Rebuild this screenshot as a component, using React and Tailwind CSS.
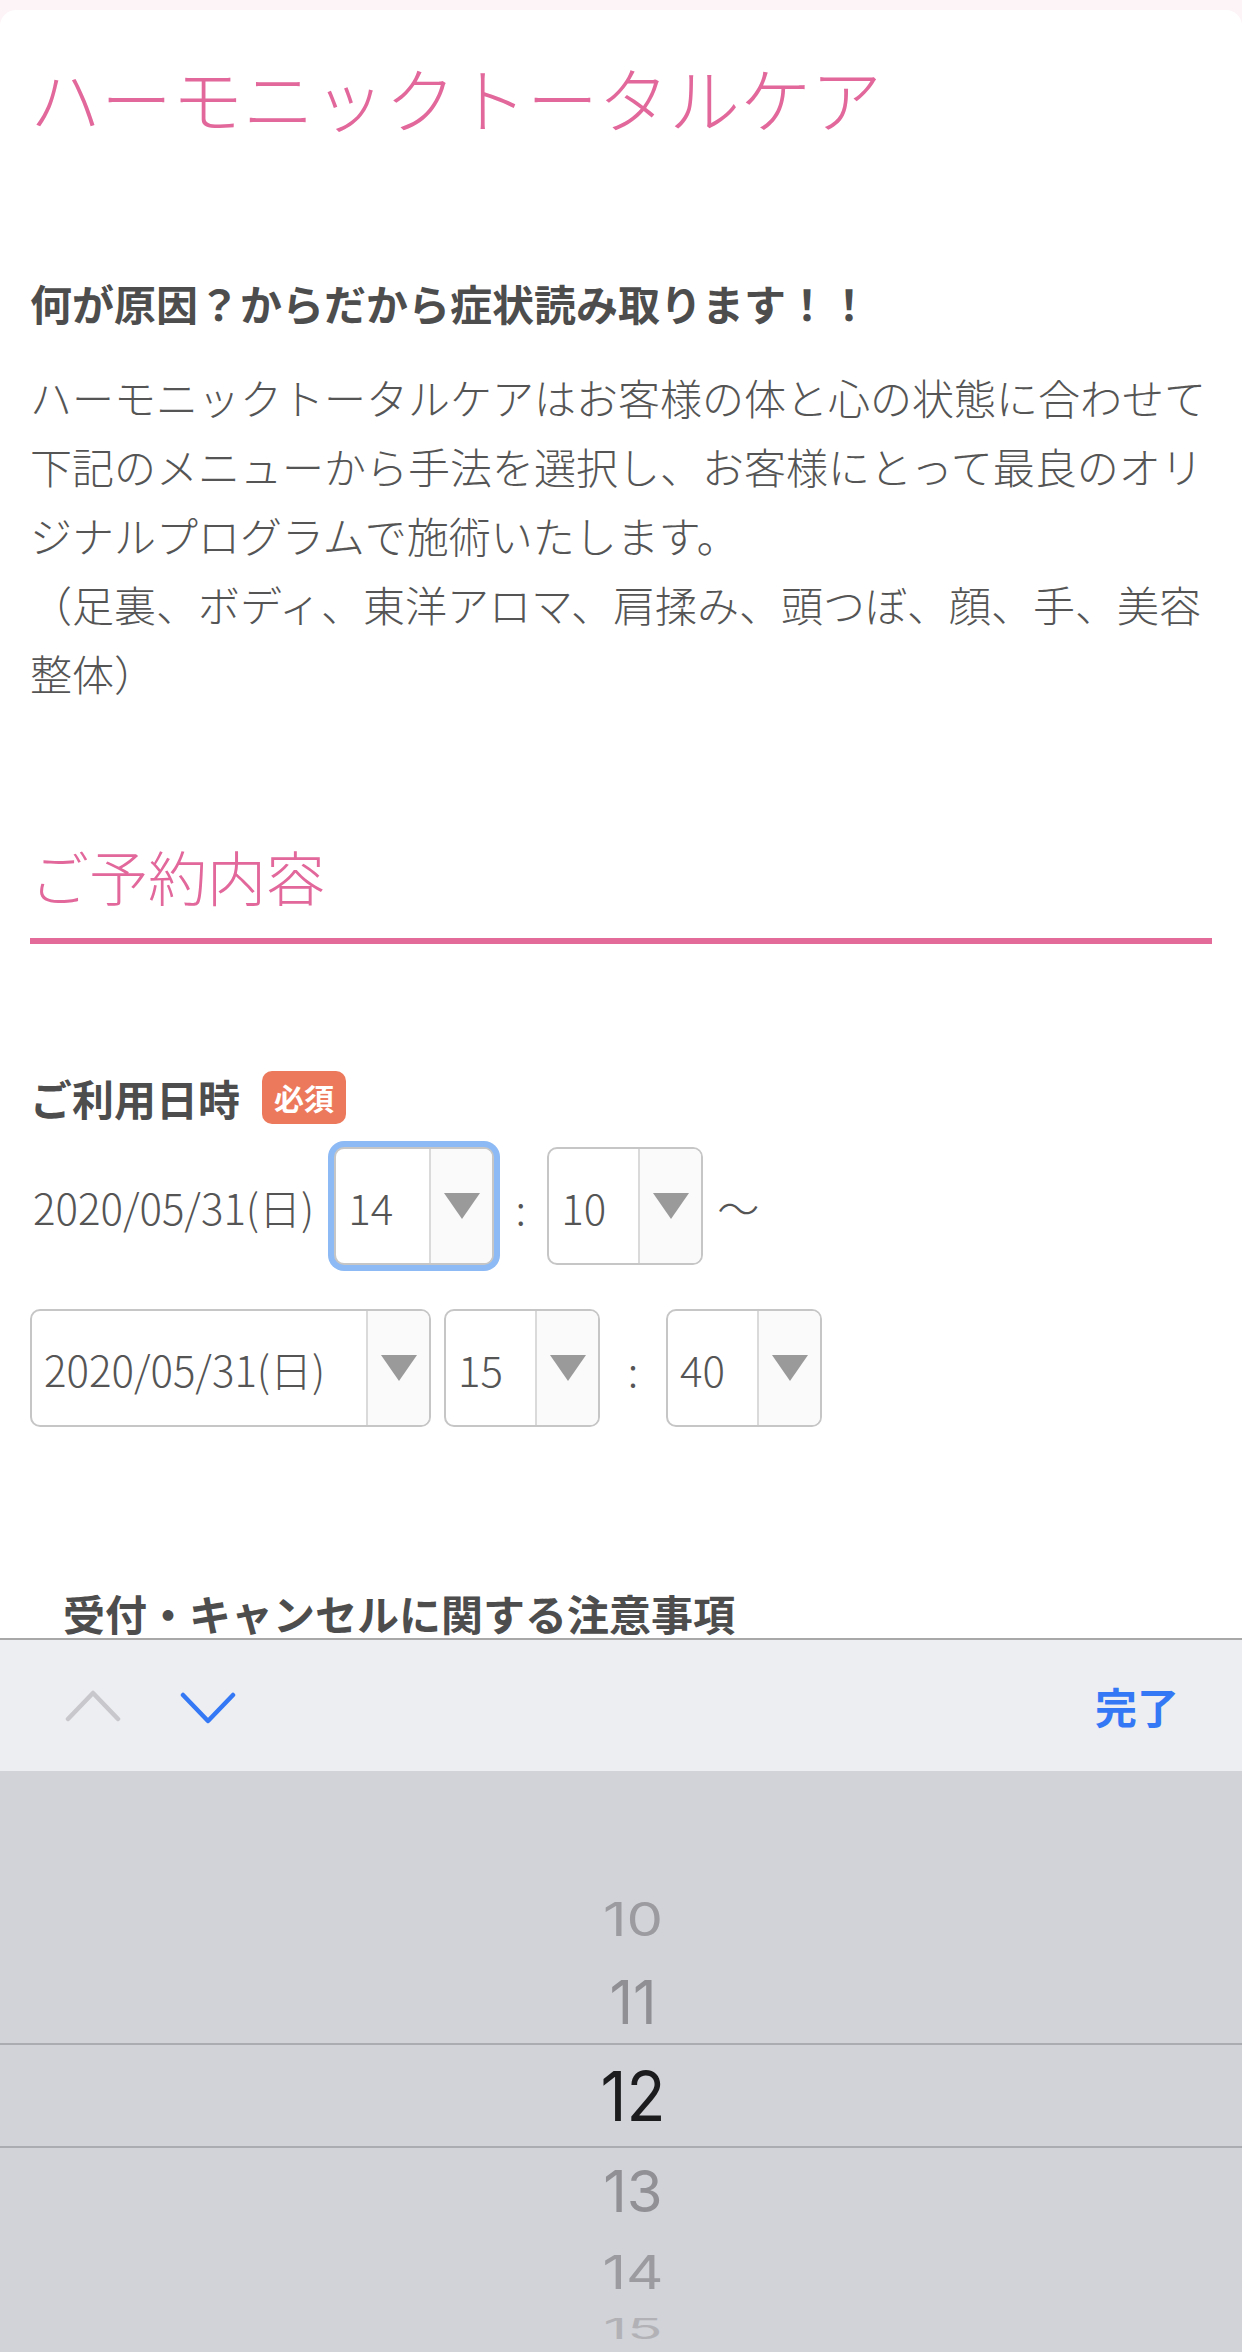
import React from "react";

const lines = [
  "ハーモニックトータルケアはお客様の体と心の状態に合わせて",
  "下記のメニューから手法を選択し、お客様にとって最良のオリ",
  "ジナルプログラムで施術いたします。",
  "（足裏、ボディ、東洋アロマ、肩揉み、頭つぼ、顔、手、美容",
  "整体）",
];

function Arrow() {
  return (
    <svg width="36" height="26" viewBox="0 0 36 26">
      <polygon points="0,0 36,0 18,26" fill="#9a9a9a" />
    </svg>
  );
}

function Select({ value, width, focused }) {
  return (
    <div
      className={`flex h-[118px] shrink-0 rounded-[10px] border-2 border-[#c6c6c6] bg-white ${width} ${
        focused ? "ring-[6px] ring-[#8dbaf4]" : ""
      }`}
    >
      <div className="flex flex-1 items-center whitespace-nowrap pl-[12px] text-[42px] font-light text-[#555]">
        {value}
      </div>
      <div className="flex w-[63px] items-center justify-center rounded-r-[8px] border-l-2 border-[#dadada] bg-[#fafafa]">
        <Arrow />
      </div>
    </div>
  );
}

function WheelRow({ h, children, cls }) {
  return (
    <div className={`flex w-full shrink-0 items-center justify-center pl-[24px] ${h}`}>
      <span className={`inline-block leading-none ${cls}`}>{children}</span>
    </div>
  );
}

export default function App() {
  return (
    <div className="relative min-h-screen overflow-hidden bg-[#fdf4f7] pt-[10px] font-['Noto_Sans_CJK_JP',sans-serif] text-[#555]">
      <div className="min-h-[2342px] rounded-t-[16px] bg-white px-[30px] pt-[33px]">
        <h1 className="whitespace-nowrap text-[71px] font-light leading-[106px] text-[#e2679b]">
          ハーモニックトータルケア
        </h1>
        <p className="mt-[122px] whitespace-nowrap text-[42px] font-bold leading-[63px] text-[#4d4d4d]">
          何が原因？からだから症状読み取ります！！
        </p>
        <div className="mt-[28px] text-[42px] font-light leading-[69px]">
          {lines.map((l) => (
            <div key={l} className="whitespace-nowrap">
              {l}
            </div>
          ))}
        </div>

        <h2 className="mt-[125px] border-b-[6px] border-[#e36b99] pb-[18px] text-[59px] font-light leading-[88px] text-[#e2679b]">
          ご予約内容
        </h2>

        <div className="mt-[122px] flex h-[63px] items-center gap-[22px]">
          <span className="text-[42px] font-bold text-[#4d4d4d]">ご利用日時</span>
          <span className="flex h-[53px] w-[84px] items-center justify-center rounded-[10px] bg-[#ec795b] text-[30px] font-bold text-white">
            必須
          </span>
        </div>

        <div className="mt-[18px] flex h-[118px] items-center font-light">
          <span className="whitespace-nowrap pl-[3px] text-[42px]">2020/05/31(日)</span>
          <div className="ml-[20px]">
            <Select value="14" width="w-[160px]" focused />
          </div>
          <span className="w-[53px] text-center text-[42px]">:</span>
          <Select value="10" width="w-[156px]" />
          <span className="ml-[14px] text-[42px]">〜</span>
        </div>

        <div className="mt-[44px] flex h-[118px] items-center font-light">
          <Select value="2020/05/31(日)" width="w-[401px]" />
          <div className="ml-[13px]">
            <Select value="15" width="w-[156px]" />
          </div>
          <span className="w-[66px] text-center text-[42px]">:</span>
          <Select value="40" width="w-[156px]" />
        </div>

        <p className="mt-[154px] whitespace-nowrap pl-[33px] text-[42px] font-bold leading-[63px] text-[#4d4d4d]">
          受付・キャンセルに関する注意事項
        </p>
      </div>

      <div className="fixed inset-x-0 bottom-0">
        <div className="flex h-[133px] items-center justify-between border-t-2 border-[#a8a8a8] bg-[#edeef1] pl-[65px] pr-[63px]">
          <div className="flex items-center gap-[59px]">
            <svg width="56" height="32" viewBox="0 0 56 32">
              <polyline
                points="3,29 28,3 53,29"
                fill="none"
                stroke="#c7c7cc"
                strokeWidth="4.5"
                strokeLinecap="round"
                strokeLinejoin="round"
              />
            </svg>
            <svg width="56" height="32" viewBox="0 0 56 32" className="mt-[5px]">
              <polyline
                points="3,3 28,29 53,3"
                fill="none"
                stroke="#3478f6"
                strokeWidth="4.5"
                strokeLinecap="round"
                strokeLinejoin="round"
              />
            </svg>
          </div>
          <span className="text-[42px] font-bold text-[#3478f6]">完了</span>
        </div>

        <div className="flex h-[581px] flex-col items-center bg-[#d1d3d8] font-['Inter',sans-serif]">
          <div className="h-[107px] shrink-0" />
          <WheelRow h="h-[82px]" cls="scale-y-[0.79] text-[58px] text-[#9c9ca0]">
            10
          </WheelRow>
          <WheelRow h="h-[83px]" cls="scale-y-[1.05] text-[58px] text-[#8f8f94]">
            11
          </WheelRow>
          <div className="flex h-[105px] w-full shrink-0 items-center justify-center border-y-2 border-[#abacb1] pl-[24px]">
            <span className="inline-block scale-y-[1.07] text-[64px] leading-none text-[#1c1c1e]">12</span>
          </div>
          <WheelRow h="h-[85px]" cls="text-[58px] text-[#909095]">
            13
          </WheelRow>
          <WheelRow h="h-[78px]" cls="scale-y-[0.81] text-[58px] text-[#9c9ca0]">
            14
          </WheelRow>
          <WheelRow h="h-[36px]" cls="scale-y-[0.48] text-[58px] text-[#b2b2b6]">
            15
          </WheelRow>
        </div>
      </div>
    </div>
  );
}
